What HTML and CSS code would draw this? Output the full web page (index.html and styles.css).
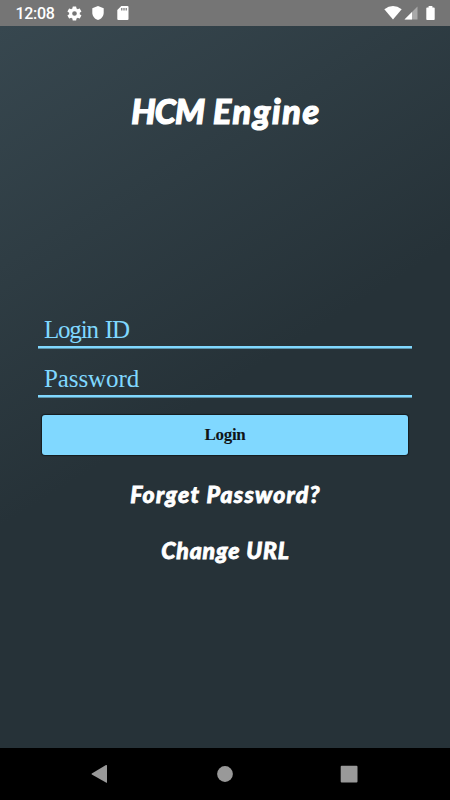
FILE: index.html
```html
<!DOCTYPE html>
<html lang="en">
<head>
<meta charset="utf-8">
<title>HCM Engine</title>
<link rel="stylesheet" href="styles.css">
</head>
<body>
<div class="screen">
  <header class="status">
    <span class="time">12:08</span>
    <svg class="gear" width="17" height="17" viewBox="0 0 24 24"><path d="M19.4 13a7.500 7.500 0 0 0 0-2l2.100-1.600a.5.5 0 0 0 .1-.6l-2-3.500a.5.5 0 0 0-.6-.2l-2.500 1a7 7 0 0 0-1.700-1L14.400 2.400a.5.5 0 0 0-.5-.4h-4a.5.5 0 0 0-.5.4L9 5.100a7 7 0 0 0-1.700 1l-2.500-1a.5.5 0 0 0-.6.2l-2 3.500a.5.5 0 0 0 .1.6L4.500 11a7.500 7.500 0 0 0 0 2l-2.200 1.600a.5.5 0 0 0-.1.6l2 3.500c.1.2.4.3.6.2l2.500-1a7 7 0 0 0 1.700 1l.4 2.700c0 .2.200.4.5.4h4c.3 0 .5-.2.5-.4l.4-2.700a7 7 0 0 0 1.700-1l2.500 1c.2.1.5 0 .6-.2l2-3.500a.5.5 0 0 0-.1-.6zM12 15.300a3.300 3.300 0 1 1 0-6.600 3.300 3.300 0 0 1 0 6.600z"/></svg>
    <svg class="shield" width="12" height="14" viewBox="0 0 12 14"><path d="M6 0l5.700 2.200v4.500c0 3.500-2.400 6.300-5.700 7.300C2.700 13 .3 10.200.3 6.700V2.200z"/></svg>
    <svg class="card" width="12" height="14" viewBox="0 0 12 14"><path fill-rule="evenodd" d="M4.300 0H10.500q1 0 1 1v12q0 1-1 1H1.300q-1 0-1-1V4zM4.200 2v2.400h1.200V2zM6.400 2v2.400h1.200V2zM8.600 2v2.400h1.200V2z"/></svg>
    <div class="signals">
      <svg width="18" height="14" viewBox="0 0 18 14"><path d="M.3 3.200Q9-3 17.700 3.200L9 13.500z"/></svg>
      <svg width="14" height="14" viewBox="0 0 14 14"><path class="dim" d="M13.500.5v13H.5z"/><path d="M8 6v7.500H.5z"/></svg>
      <svg class="battery" width="9" height="14" viewBox="0 0 9 14"><path d="M2.600 0h3.800v1.400h1.500q.8 0 .8.800v11q0 .8-.8.800H1.100q-.8 0-.8-.8v-11q0-.8.8-.8h1.500z"/></svg>
    </div>
  </header>
  <main class="content">
    <h1 class="title"><span class="acronym">HCM</span> Engine</h1>
    <form class="form">
      <div class="field"><span class="login-label">Login ID</span></div>
      <div class="field second"><span class="password-label">Password</span></div>
      <button class="button" type="button">Login</button>
    </form>
    <a class="link forget">Forget Password?</a>
    <a class="link change">Change URL</a>
  </main>
  <nav class="nav">
    <svg width="18" height="20" viewBox="0 0 18 20"><path d="M15.500 1q.5 0 .5.600v16.800q0 .6-.6.300L.8 10.500q-.6-.5 0-1L15 1.100z"/></svg>
    <svg width="18" height="18" viewBox="0 0 18 18"><circle cx="9" cy="9" r="7.900"/></svg>
    <svg width="18" height="18" viewBox="0 0 18 18"><rect x=".7" y=".7" width="16.800" height="16.800" rx="1"/></svg>
  </nav>
</div>
</body>
</html>
```
FILE: styles.css
```css
* { box-sizing: border-box; }
body { margin: 0; background: #000; }
.screen { width: 450px; height: 800px; display: flex; flex-direction: column; overflow: hidden; }
svg { display: block; flex: none; fill: #fff; }
.status { height: 26px; flex: none; display: flex; align-items: center; padding: 0 15px; background: #757575; color: #fff; }
.time { width: 39px; font: 500 16px/26px Roboto, sans-serif; letter-spacing: -.3px; white-space: nowrap; padding: 2px 0 0 .5px; }
.gear { margin-left: 12px; }
.shield { margin-left: 9px; }
.card { margin-left: 13px; }
.signals { margin-left: auto; display: flex; gap: 2px; }
.dim { fill: #a9a9a9; }
.battery { margin-left: 6px; }
.content { flex: 1; display: flex; flex-direction: column; align-items: center; padding: 60px 38px 0; background: linear-gradient(148deg, #37474f 0%, #263238 50%, #263238 100%); }
.title { margin: 0; height: 50px; padding-left: 2px; font: italic 900 34px/50px Lato, sans-serif; letter-spacing: 1.7px; -webkit-text-stroke: 1.2px #fff; color: #fff; white-space: nowrap; }
.acronym { letter-spacing: -.9px; }
.form { width: 100%; margin-top: 171px; display: flex; flex-direction: column; }
.field { height: 41px; padding: 3px 0 0 6px; border-bottom: 2px solid #80d8ff; box-shadow: 0 1px 0 #5b93aa, 0 -1px 0 0 transparent; color: #80d8ff; font: 25px/40px "Liberation Serif", serif; white-space: nowrap; }
.login-label { letter-spacing: -1.2px; word-spacing: 2px; }
.password-label { letter-spacing: -.1px; }
.second { margin-top: 8px; }
.button { height: 40px; margin: 18px 4px 0; padding: 0; border: 0; border-radius: 3px; background: #80d8ff; box-shadow: 0 0 1px 1px #151c20; color: #101518; font: bold 17px/40px "Liberation Serif", serif; letter-spacing: -.3px; }
.link { font: italic 900 23px/34px Lato, sans-serif; -webkit-text-stroke: .8px #fff; color: #fff; white-space: nowrap; }
.forget { margin-top: 22px; letter-spacing: 1.25px; padding-left: 1px; }
.change { margin-top: 22px; letter-spacing: .85px; padding-left: 1px; }
.nav { height: 52px; flex: none; display: flex; align-items: center; justify-content: space-between; padding: 0 92px 0 91px; background: #000; }
.nav svg { fill: #999; }
```
